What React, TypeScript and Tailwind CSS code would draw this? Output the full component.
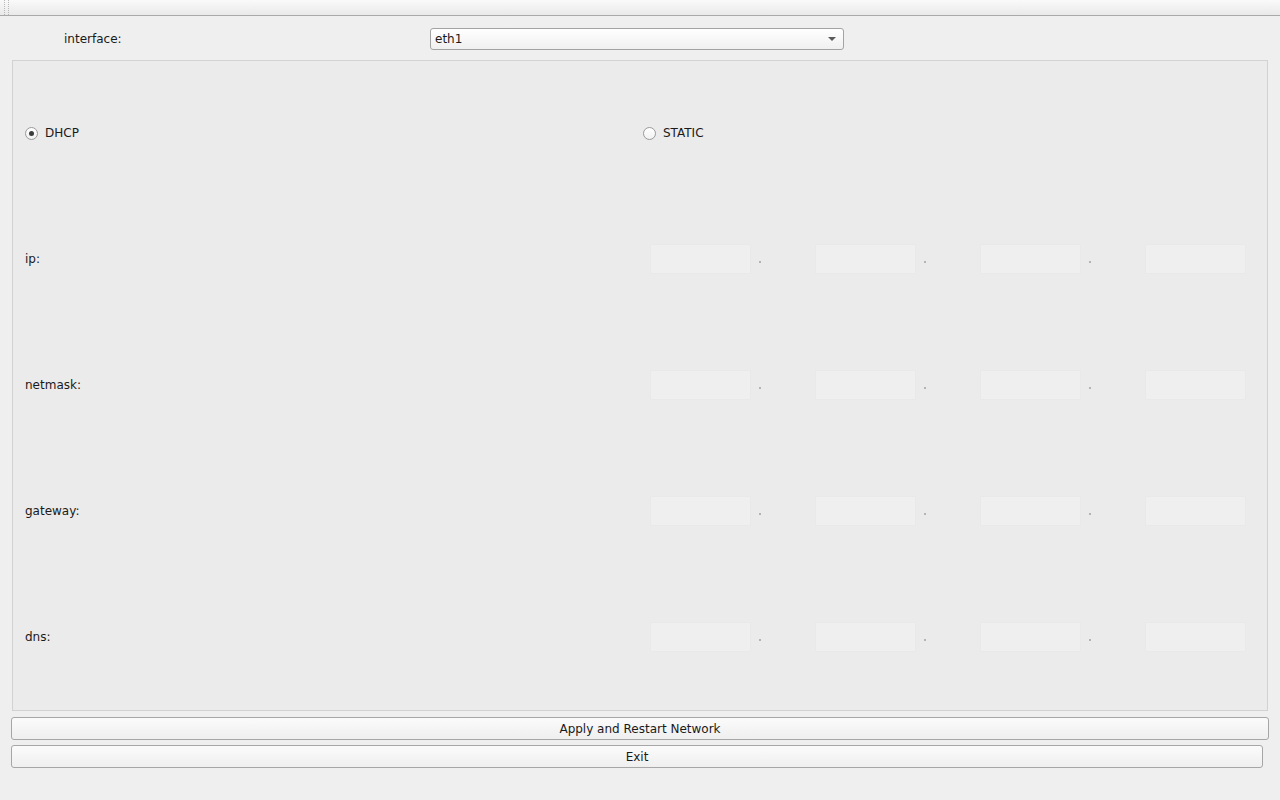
import React from 'react'

const font = { fontFamily: '"DejaVu Sans", "Liberation Sans", sans-serif' }

function Radio({ label, checked }: { label: string; checked?: boolean }) {
  return (
    <div className="flex items-center gap-[7px]">
      <span className="w-[13px] h-[13px] rounded-full border border-[#9a9a9a] bg-gradient-to-b from-[#ffffff] to-[#f2f2f2] flex items-center justify-center">
        {checked && <span className="w-[5px] h-[5px] rounded-full bg-[#3c3c3c]" />}
      </span>
      <span>{label}</span>
    </div>
  )
}

function IpField() {
  const parts = [0, 1, 2, 3]
  return (
    <div className="flex items-center pl-[7px]">
      {parts.map((p) => (
        <div key={p} className="flex items-center">
          <div className="w-[101px] h-[30px] bg-[#efefef] border border-[#e9e9e9]" />
          {p < 3 && (
            <div className="w-[64px] h-[30px] flex items-center pl-[8px]">
              <span className="w-[2px] h-[2px] mt-[6px] bg-[#b4b4b4]" />
            </div>
          )}
        </div>
      ))}
    </div>
  )
}

export default function App() {
  const rows = ['ip:', 'netmask:', 'gateway:', 'dns:']

  return (
    <div style={font} className="w-[1280px] h-[800px] bg-[#efefef] text-[12px] text-[#1a1a1a] flex flex-col overflow-hidden">
      {/* title strip */}
      <div className="h-[16px] bg-gradient-to-b from-[#fafafa] to-[#e9e9e9] border-b border-[#a9a9a9] flex">
        <div className="ml-[4px] w-[5px] h-[15px] border-x border-dotted border-[#b8b8b8]" />
      </div>

      {/* interface row */}
      <div className="flex items-center mt-[12px] h-[22px]">
        <span className="w-[430px] pl-[64px]">interface:</span>
        <div className="w-[414px] h-[22px] rounded-[3px] border border-[#a3a3a3] bg-gradient-to-b from-[#ffffff] to-[#f0f0f0] flex items-center justify-between px-[4px]">
          <span>eth1</span>
          <span className="w-0 h-0 border-x-[4px] border-x-transparent border-t-[4px] border-t-[#5a5a5a] mr-[3px]" />
        </div>
      </div>

      {/* group */}
      <div className="mx-[12px] mt-[10px] h-[651px] border border-[#d2d2d2] bg-[#ebebeb] pt-[9px] px-[12px] flex flex-col">
        <div className="h-[126px] flex items-center">
          <div className="w-[618px]">
            <Radio label="DHCP" checked />
          </div>
          <Radio label="STATIC" />
        </div>
        {rows.map((r) => (
          <div key={r} className="h-[126px] flex items-center">
            <div className="w-[618px]">{r}</div>
            <IpField />
          </div>
        ))}
      </div>

      {/* buttons */}
      <div className="flex flex-col gap-[5px] mt-[6px] pl-[11px]">
        <button className="w-[1258px] h-[23px] rounded-[3px] border border-[#a6a6a6] bg-gradient-to-b from-[#fbfbfb] to-[#efefef] text-[#1a1a1a]">
          Apply and Restart Network
        </button>
        <button className="w-[1252px] h-[23px] rounded-[3px] border border-[#a6a6a6] bg-gradient-to-b from-[#fbfbfb] to-[#efefef] text-[#1a1a1a]">
          Exit
        </button>
      </div>
    </div>
  )
}
